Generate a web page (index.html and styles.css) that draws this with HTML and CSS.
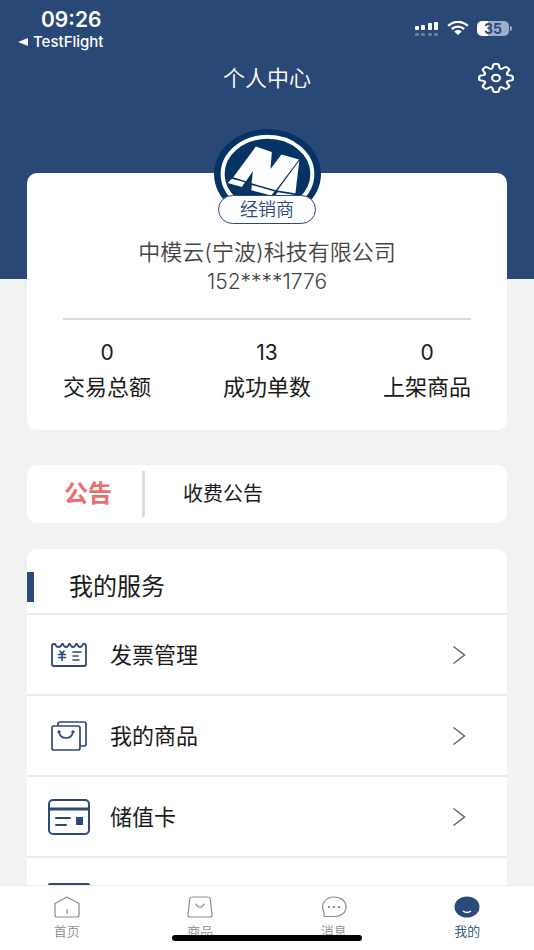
FILE: index.html
```html
<!DOCTYPE html>
<html lang="zh-CN">

<head>
    <meta charset="UTF-8">
    <meta name="viewport" content="width=device-width, initial-scale=1.0">
    <title>个人中心</title>
    <link rel="stylesheet" href="styles.css">
</head>

<body>

    <div class="content">
        <header class="hero">
            <!-- Status Bar -->
            <div class="status-bar">
                <div class="status-left">
                    <div class="time">09:26</div>
                    <a class="back-app" href="#">
                        <svg width="10" height="8" viewBox="0 0 10 8"><path d="M0 4L10 0V8Z" fill="#fff"/></svg>
                        TestFlight
                    </a>
                </div>
                <div class="status-right">
                    <svg width="24" height="15" viewBox="0 0 24 15" fill="#fff">
                        <rect x="0" y="5" width="4" height="4" rx="1"/>
                        <rect x="6" y="4" width="4" height="5" rx="1"/>
                        <rect x="13" y="2" width="4" height="7" rx="1"/>
                        <rect x="19" y="1" width="4" height="8" rx="1"/>
                        <g opacity=".3">
                            <rect x="0" y="12" width="4" height="3" rx="1"/>
                            <rect x="6" y="12" width="4" height="3" rx="1"/>
                            <rect x="13" y="12" width="4" height="3" rx="1"/>
                            <rect x="19" y="12" width="4" height="3" rx="1"/>
                        </g>
                    </svg>
                    <svg width="22" height="14" viewBox="0 0 22 14">
                        <path d="M1.2 4.8C6.8-.4 15.2-.4 20.8 4.8M4.8 8C8.4 4.8 13.6 4.8 17.2 8" fill="none" stroke="#fff" stroke-width="2.4"/>
                        <path d="M7.2 10.5Q11 7.6 14.8 10.5L11 14Z" fill="#fff"/>
                    </svg>
                    <div class="battery"><span>35</span></div>
                </div>
            </div>

            <div class="nav-bar">
                <h1>个人中心</h1>
                <button class="settings" type="button" aria-label="设置">
                    <svg width="36" height="30" viewBox="-12 -12 24 24" preserveAspectRatio="none" fill="none" stroke="#fff" stroke-width="1.5" stroke-linecap="round" stroke-linejoin="round">
                        <path id="tooth" d="M-3.06-7.4Q-2.5-7.63-2.3-8.4L-1.9-10.300Q-1.700-11.200-.9-11.200H.9Q1.700-11.200 1.900-10.300L2.300-8.400Q2.500-7.630 3.060-7.400"/>
                        <use href="#tooth" transform="rotate(45)"/>
                        <use href="#tooth" transform="rotate(90)"/>
                        <use href="#tooth" transform="rotate(135)"/>
                        <use href="#tooth" transform="rotate(180)"/>
                        <use href="#tooth" transform="rotate(225)"/>
                        <use href="#tooth" transform="rotate(270)"/>
                        <use href="#tooth" transform="rotate(315)"/>
                        <circle r="2.6"/>
                    </svg>
                </button>
            </div>
        </header>

        <main>
            <!-- Profile Card -->
            <section class="card profile">
                <svg class="avatar" width="107" height="90" viewBox="0 0 322 270">
                    <ellipse cx="161" cy="135" rx="161" ry="135" fill="#043364"/>
                    <ellipse cx="161" cy="135" rx="135" ry="112" fill="none" stroke="#fff" stroke-width="12"/>
                    <path d="M126 52L174 69L170 120L203 76L256 91L186 184L113 163L117 127L96 157L58 145Z" fill="#fff"/>
                    <path d="M257 94L245 193L191 185Z" fill="#fff"/>
                    <path d="M54 149L93 160L84 174L41 162ZM114 168L182 188L172 200L112 184ZM192 190L244 198L238 207L184 200Z" fill="#fff"/>
                </svg>
                <span class="role">经销商</span>
                <div class="company">中模云(宁波)科技有限公司</div>
                <div class="phone">152****1776</div>
                <hr>
                <div class="stats">
                    <div><b>0</b><span>交易总额</span></div>
                    <div><b>13</b><span>成功单数</span></div>
                    <div><b>0</b><span>上架商品</span></div>
                </div>
            </section>

            <!-- Notice -->
            <section class="card notice">
                <h2>公告</h2>
                <a href="#">收费公告</a>
            </section>

            <!-- Services -->
            <section class="card services">
                <h2>我的服务</h2>
                <a class="service" href="#">
                    <span class="service-icon">
                        <svg width="36" height="24" viewBox="0 0 36 24" fill="none" stroke="#2b4a7a" stroke-width="1.8" stroke-linecap="round" stroke-linejoin="round">
                            <path d="M3 1H4Q5 4 7.5 4T11 1H12Q13 4 15 4T18 1H19Q20 4 22 4T25 1H26Q27 4 29 4T32 1H33Q35 1 35 3V21Q35 23 33 23H3Q1 23 1 21V3Q1 1 3 1Z"/>
                            <path d="M9 8L11 11L13 8M7.5 11.5H14.5M7.5 14.5H14.5M11 11V17.5M22 9H30M22 13H27M22 17H28" stroke-width="1.6"/>
                        </svg>
                    </span>
                    发票管理
                    <svg class="arrow" width="14" height="20" viewBox="0 0 14 20"><path d="M1.5 1.5L12.5 10L1.5 18.5"/></svg>
                </a>
                <a class="service" href="#">
                    <span class="service-icon">
                        <svg width="36" height="30" viewBox="0 0 36 30" fill="none" stroke="#2b4a7a" stroke-width="1.7" stroke-linecap="round" stroke-linejoin="round">
                            <rect x="1" y="5" width="28" height="24" rx="2"/>
                            <path d="M7 4V3Q7 1 9 1H33Q35 1 35 3V23Q35 25 33 25H30"/>
                            <path d="M8 11Q9 17 15 17T22 11"/>
                            <path d="M7 11L8 10L9 11M21 11L22 10L23 11"/>
                        </svg>
                    </span>
                    我的商品
                    <svg class="arrow" width="14" height="20" viewBox="0 0 14 20"><path d="M1.5 1.5L12.5 10L1.5 18.5"/></svg>
                </a>
                <a class="service" href="#">
                    <span class="service-icon">
                        <svg width="42" height="36" viewBox="0 0 42 36" fill="none" stroke="#2b4a7a" stroke-width="2" stroke-linecap="round">
                            <rect x="1" y="1" width="40" height="34" rx="4"/>
                            <path d="M1 10H41" stroke-width="3"/>
                            <path d="M8 19H22M8 26H18"/>
                            <path d="M28 18H35V26H28Z" fill="#2b4a7a" stroke="none"/>
                        </svg>
                    </span>
                    储值卡
                    <svg class="arrow" width="14" height="20" viewBox="0 0 14 20"><path d="M1.5 1.5L12.5 10L1.5 18.5"/></svg>
                </a>
                <a class="service" href="#" aria-label="更多">
                    <span class="service-icon">
                        <svg width="42" height="30" viewBox="0 0 42 30" fill="none" stroke="#2b4a7a" stroke-width="2">
                            <rect x="1" y="1" width="40" height="28" rx="1"/>
                        </svg>
                    </span>
                </a>
            </section>
        </main>
    </div>

    <!-- Tab Bar -->
    <nav class="tab-bar">
        <a href="#">
            <svg width="26" height="22" viewBox="0 0 26 22" fill="none" stroke="#8c8c8c" stroke-width="1.2" stroke-linejoin="round">
                <path d="M1 7.5L13 1L25 7.5V19Q25 21 23 21H3Q1 21 1 19ZM13 13V18"/>
            </svg>
            首页
        </a>
        <a href="#">
            <svg width="26" height="22" viewBox="0 0 26 22" fill="none" stroke="#8c8c8c" stroke-width="1.2" stroke-linecap="round">
                <path d="M5 1H21Q23 1 23.3 3L25 19Q25 21 23 21H3Q1 21 1 19L2.7 3Q3 1 5 1ZM9 8Q10 11 13 11T17 8"/>
            </svg>
            商品
        </a>
        <a href="#">
            <svg width="26" height="22" viewBox="0 0 26 22" fill="none" stroke="#8c8c8c" stroke-width="1.2" stroke-linejoin="round">
                <path d="M3 20.5V16C-1 9 4 1 13 1C20 1 25 5 25 11C25 17 20 20.5 13 20.5Z"/>
                <path d="M7 11H9M12 11H14M17 11H19" stroke-width="2"/>
            </svg>
            消息
        </a>
        <a class="active" href="#">
            <svg width="26" height="22" viewBox="0 0 26 22">
                <ellipse cx="13" cy="11" rx="12.5" ry="10.5" fill="#2b4a7a"/>
                <path d="M9 15Q13 18 17 15" fill="none" stroke="#fff" stroke-width="1.3"/>
            </svg>
            我的
        </a>
        <div class="home-indicator"></div>
    </nav>

</body>

</html>
```
FILE: styles.css
```css
* {
    box-sizing: border-box;
}

body {
    display: flex;
    flex-direction: column;
    height: 100vh;
    margin: 0;
    font-family: Inter, "Noto Sans CJK SC", sans-serif;
    font-size: 22px;
    line-height: 30px;
    color: #1a1a1a;
    background-color: #f2f2f2;
}

h1,
h2 {
    margin: 0;
    font-weight: normal;
}

a {
    color: inherit;
    text-decoration: none;
}

svg {
    display: block;
    flex-shrink: 0;
}

.content {
    flex: 1;
    min-height: 0;
    overflow: hidden;
}

/* Header */
.hero {
    height: 279px;
    color: #fff;
    background-color: #2a4876;
}

.status-bar {
    display: flex;
    justify-content: space-between;
    height: 56px;
    padding: 8px 25px 0 18px;
}

.time {
    padding-left: 23px;
    font-size: 21px;
    font-weight: 600;
    line-height: 24px;
}

.back-app {
    display: flex;
    align-items: center;
    gap: 5px;
    font-size: 15px;
    font-weight: 500;
    line-height: 20px;
}

.status-right {
    display: flex;
    align-items: center;
    gap: 8px;
    height: 40px;
}

.battery {
    position: relative;
    width: 32px;
    height: 15px;
    border-radius: 5px;
    color: #2a4876;
    background: linear-gradient(to right, #fff 35%, #a0aec8 35%);
    font-size: 14px;
    font-weight: 700;
    line-height: 15px;
    text-align: center;
}

.battery::after {
    content: "";
    position: absolute;
    top: 5px;
    right: -3px;
    width: 2px;
    height: 5px;
    border-radius: 0 2px 2px 0;
    background-color: #a0aec8;
}

.nav-bar {
    display: grid;
    grid-template-columns: 1fr auto 1fr;
    align-items: center;
    height: 44px;
    padding: 0 20px;
}

.nav-bar h1 {
    grid-column: 2;
    font-size: 22px;
    font-weight: 350;
}

.settings {
    justify-self: end;
    padding: 0;
    border: none;
    background: none;
}

/* Cards */
main {
    margin-top: -106px;
    padding: 0 27px;
}

.card {
    border-radius: 10px;
    background-color: #fff;
}

.profile {
    display: flex;
    flex-direction: column;
    align-items: center;
    padding-bottom: 26px;
}

.avatar {
    margin-top: -44px;
}

.role {
    position: relative;
    width: 98px;
    height: 29px;
    margin: -24px 0 13px;
    border: 1px solid #2b4a7a;
    border-radius: 15px;
    color: #2b4a7a;
    background-color: #fff;
    font-size: 18px;
    font-weight: 350;
    line-height: 27px;
    text-align: center;
}

.company,
.phone {
    color: #444;
    font-weight: 350;
}

.phone {
    font-size: 21px;
}

.profile hr {
    align-self: stretch;
    height: 2px;
    margin: 21px 36px 16px;
    border: none;
    background-color: #ddd;
}

.stats {
    display: flex;
    align-self: stretch;
}

.stats div {
    display: flex;
    flex: 1;
    flex-direction: column;
    align-items: center;
    line-height: 34px;
}

.stats b {
    font-size: 21px;
    font-weight: 400;
}

.notice {
    display: flex;
    align-items: center;
    height: 58px;
    margin-top: 35px;
}

.notice h2 {
    width: 118px;
    padding-left: 37px;
    border-right: 3px solid #ddd;
    color: #ea6f6f;
    font-size: 24px;
    font-weight: 700;
    line-height: 46px;
}

.notice a {
    padding-left: 38px;
    font-size: 20px;
}

.services {
    margin-top: 26px;
}

.services h2 {
    display: flex;
    align-items: center;
    height: 66px;
    padding-top: 12px;
    border-bottom: 2px solid #ebebeb;
    font-size: 24px;
}

.services h2::before {
    content: "";
    width: 7px;
    height: 30px;
    margin-right: 35px;
    background-color: #2b4a7a;
}

.service {
    display: flex;
    align-items: center;
    height: 81px;
    padding: 0 41px 0 21px;
    border-bottom: 2px solid #ebebeb;
}

.service-icon {
    display: flex;
    justify-content: center;
    width: 42px;
    margin-right: 20px;
}

.arrow {
    margin-left: auto;
    fill: none;
    stroke: #666;
    stroke-width: 1.5px;
}

/* Tab bar */
.tab-bar {
    position: relative;
    display: flex;
    height: 65px;
    border-top: 1px solid #ebebeb;
    background-color: #fff;
}

.tab-bar a {
    display: flex;
    flex: 1;
    flex-direction: column;
    align-items: center;
    gap: 3px;
    padding-top: 10px;
    color: #8c8c8c;
    font-size: 13px;
    font-weight: 350;
    line-height: 20px;
}

.tab-bar .active {
    color: #2b4a7a;
}

.home-indicator {
    position: absolute;
    bottom: 9px;
    left: 50%;
    width: 190px;
    height: 6px;
    margin-left: -95px;
    border-radius: 3px;
    background-color: #000;
}
```
